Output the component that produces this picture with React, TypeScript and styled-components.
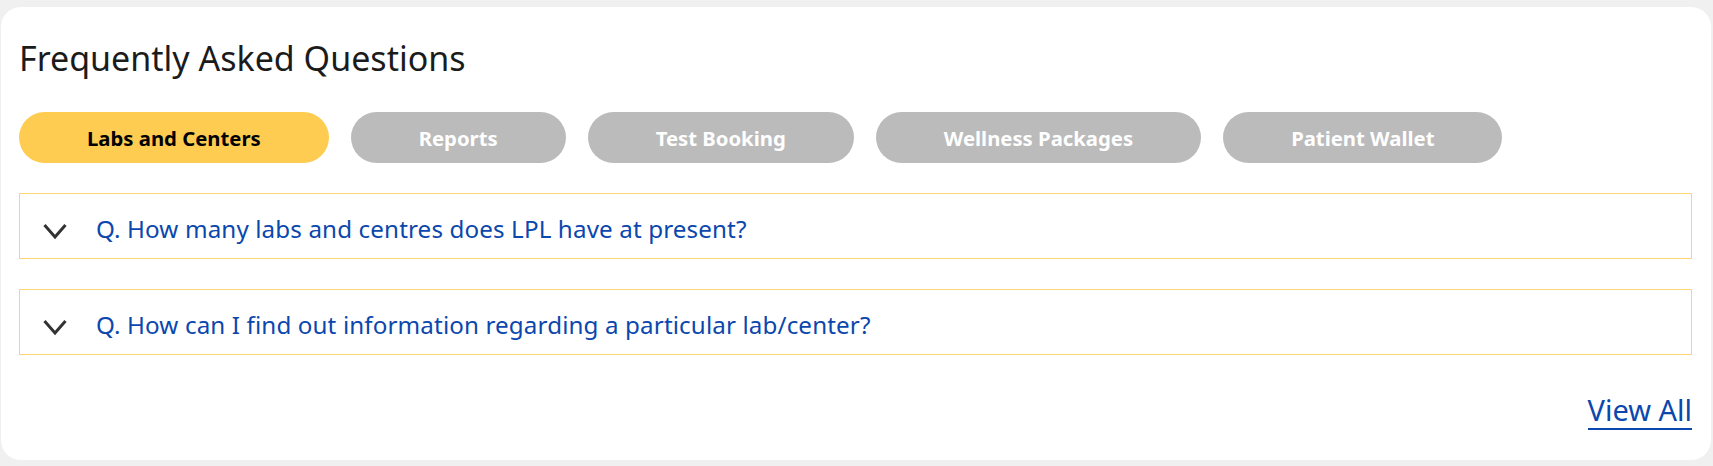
import * as React from "react";
import styled, { createGlobalStyle } from "styled-components";

const colors = {
  page: "#f0f0f0",
  title: "#1b1b1b",
  yellow: "#fecc50",
  grey: "#bbbbbb",
  border: "#f9d577",
  blue: "#0b47ad",
  chevron: "#333333",
};

const GlobalStyle = createGlobalStyle`
  html, body {
    margin: 0;
    padding: 0;
    background: ${colors.page};
  }
  body {
    font-family: "Noto Sans", Lato, "Liberation Sans", sans-serif;
  }
`;

const Card = styled.section`
  margin: 7px 2px 6px 1px;
  background: #ffffff;
  border-radius: 20px;
  padding: 31px 19px 30px 18px;
  box-sizing: border-box;
  height: 453px;
  display: flex;
  flex-direction: column;
`;

const Title = styled.h2`
  margin: 0;
  font-size: 34px;
  line-height: 40px;
  font-weight: 400;
  color: ${colors.title};
`;

const TabRow = styled.div`
  display: flex;
  gap: 22px;
  margin-top: 34px;
`;

const Tab = styled.button<{ $active?: boolean }>`
  all: unset;
  height: 51px;
  padding: 0 68px;
  border-radius: 26px;
  display: flex;
  align-items: center;
  font-size: 20.3px;
  font-weight: 700;
  color: ${(p) => (p.$active ? "#000000" : "#ffffff")};
  background: ${(p) => (p.$active ? colors.yellow : colors.grey)};
  cursor: pointer;
`;

const List = styled.div`
  display: flex;
  flex-direction: column;
  gap: 30px;
  margin-top: 30px;
`;

const Item = styled.div`
  height: 66px;
  box-sizing: border-box;
  border: 1px solid ${colors.border};
  display: flex;
  align-items: center;
  padding-left: 22px;
  gap: 28px;
`;

const Chevron = styled.svg`
  width: 26px;
  height: 18px;
  flex: none;
  margin-top: 9px;
`;

const Question = styled.span`
  font-size: 24.2px;
  letter-spacing: 0.12px;
  color: ${colors.blue};
  margin-top: 4px;
`;

const Footer = styled.div`
  margin-top: auto;
  display: flex;
  justify-content: flex-end;
`;

const ViewAll = styled.a`
  font-size: 29px;
  line-height: 37px;
  color: ${colors.blue};
  text-decoration: none;
  border-bottom: 2px solid ${colors.blue};
  cursor: pointer;
`;

const tabs = [
  "Labs and Centers",
  "Reports",
  "Test Booking",
  "Wellness Packages",
  "Patient Wallet",
];

const questions = [
  "Q. How many labs and centres does LPL have at present?",
  "Q. How can I find out information regarding a particular lab/center?",
];

const ChevronIcon = () => (
  <Chevron viewBox="0 0 26 18">
    <polyline
      points="2.5,3 13,15 23.5,3"
      fill="none"
      stroke={colors.chevron}
      strokeWidth="3"
    />
  </Chevron>
);

export default function App() {
  const [active, setActive] = React.useState(0);
  return (
    <>
      <GlobalStyle />
      <Card>
        <Title>Frequently Asked Questions</Title>
        <TabRow>
          {tabs.map((t, i) => (
            <Tab key={t} $active={i === active} onClick={() => setActive(i)}>
              {t}
            </Tab>
          ))}
        </TabRow>
        <List>
          {questions.map((q) => (
            <Item key={q}>
              <ChevronIcon />
              <Question>{q}</Question>
            </Item>
          ))}
        </List>
        <Footer>
          <ViewAll>View All</ViewAll>
        </Footer>
      </Card>
    </>
  );
}
